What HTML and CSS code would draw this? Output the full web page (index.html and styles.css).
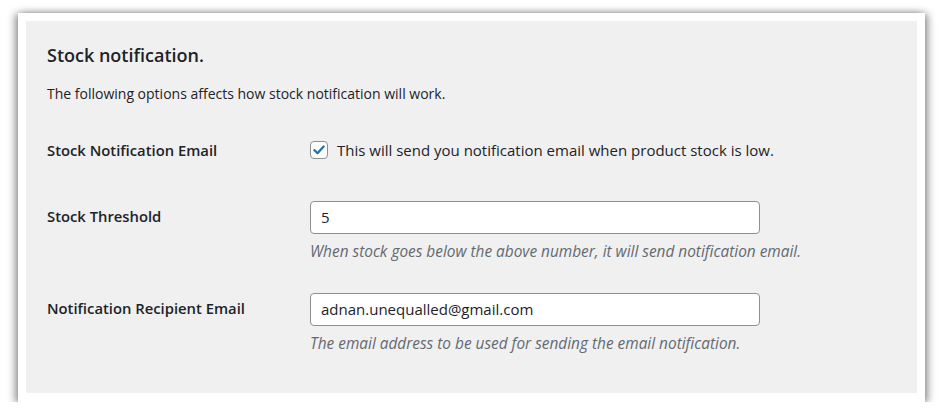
FILE: index.html
```html
<!DOCTYPE html>
<html lang="en">
<head>
<meta charset="utf-8">
<title>Stock notification</title>
<link rel="stylesheet" href="styles.css">
</head>
<body>
<div class="stage">
  <div class="paper">
    <div class="panel">
      <h2 class="title">Stock notification.</h2>
      <p class="intro">The following options affects how stock notification will work.</p>

      <div class="row row-check">
        <div class="label">Stock Notification Email</div>
        <div class="field">
          <label class="check">
            <span class="box">
              <svg viewBox="0 0 20 20" width="16" height="16" aria-hidden="true"><path d="M4.2 10.2 L8.2 14 L15.8 5.6" fill="none" stroke="#2271b1" stroke-width="2.8" stroke-linecap="round" stroke-linejoin="round"/></svg>
            </span>
            <span class="check-text">This will send you notification email when product stock is low.</span>
          </label>
        </div>
      </div>

      <div class="row row-threshold">
        <div class="label">Stock Threshold</div>
        <div class="field">
          <div class="input">5</div>
          <p class="desc">When stock goes below the above number, it will send notification email.</p>
        </div>
      </div>

      <div class="row row-email">
        <div class="label">Notification Recipient Email</div>
        <div class="field">
          <div class="input">adnan.unequalled@gmail.com</div>
          <p class="desc">The email address to be used for sending the email notification.</p>
        </div>
      </div>
    </div>
  </div>
</div>
</body>
</html>
```
FILE: styles.css
```css
html, body {
  margin: 0;
  padding: 0;
  background: #ffffff;
}

body {
  font-family: "Open Sans", "Noto Sans", sans-serif;
  color: #1d2327;
}

.stage {
  padding: 13px 0 0 18px;
}

.paper {
  width: 891px;
  height: 373px;
  padding: 8px;
  background: #ffffff;
  box-shadow: -3px 1px 8px rgba(0, 0, 0, 0.38), 3px 1px 8px rgba(0, 0, 0, 0.38);
}

.panel {
  height: 372px;
  background: #f0f0f1;
  padding: 0 21px;
  overflow: hidden;
  box-sizing: border-box;
}

.title {
  margin: 22px 0 0;
  font-size: 18px;
  line-height: 24px;
  font-weight: 600;
}

.intro {
  margin: 17px 0 0;
  font-size: 14px;
  line-height: 20px;
}

.row {
  display: grid;
  grid-template-columns: 263px 1fr;
}

.label {
  font-size: 14.8px;
  line-height: 20px;
  font-weight: 600;
  padding-top: 5px;
}

.row-check {
  margin-top: 35px;
  align-items: center;
}

.row-check .label {
  padding-top: 1px;
}

.row-threshold {
  margin-top: 41px;
}

.row-email {
  margin-top: 31px;
}

.check {
  display: flex;
  align-items: center;
  gap: 9px;
  height: 20px;
}

.box {
  width: 16px;
  height: 16px;
  border: 1px solid #8c8f94;
  border-radius: 4px;
  background: #ffffff;
  display: flex;
  align-items: center;
  justify-content: center;
}

.check-text {
  font-size: 15px;
  line-height: 20px;
}

.input {
  width: 450px;
  height: 33px;
  box-sizing: border-box;
  border: 1px solid #8c8f94;
  border-radius: 4px;
  background: #ffffff;
  padding: 0 10px;
  font-size: 15px;
  line-height: 31px;
}

.desc {
  margin: 8px 0 0;
  font-size: 15.4px;
  line-height: 20px;
  font-style: italic;
  color: #646970;
}
```
